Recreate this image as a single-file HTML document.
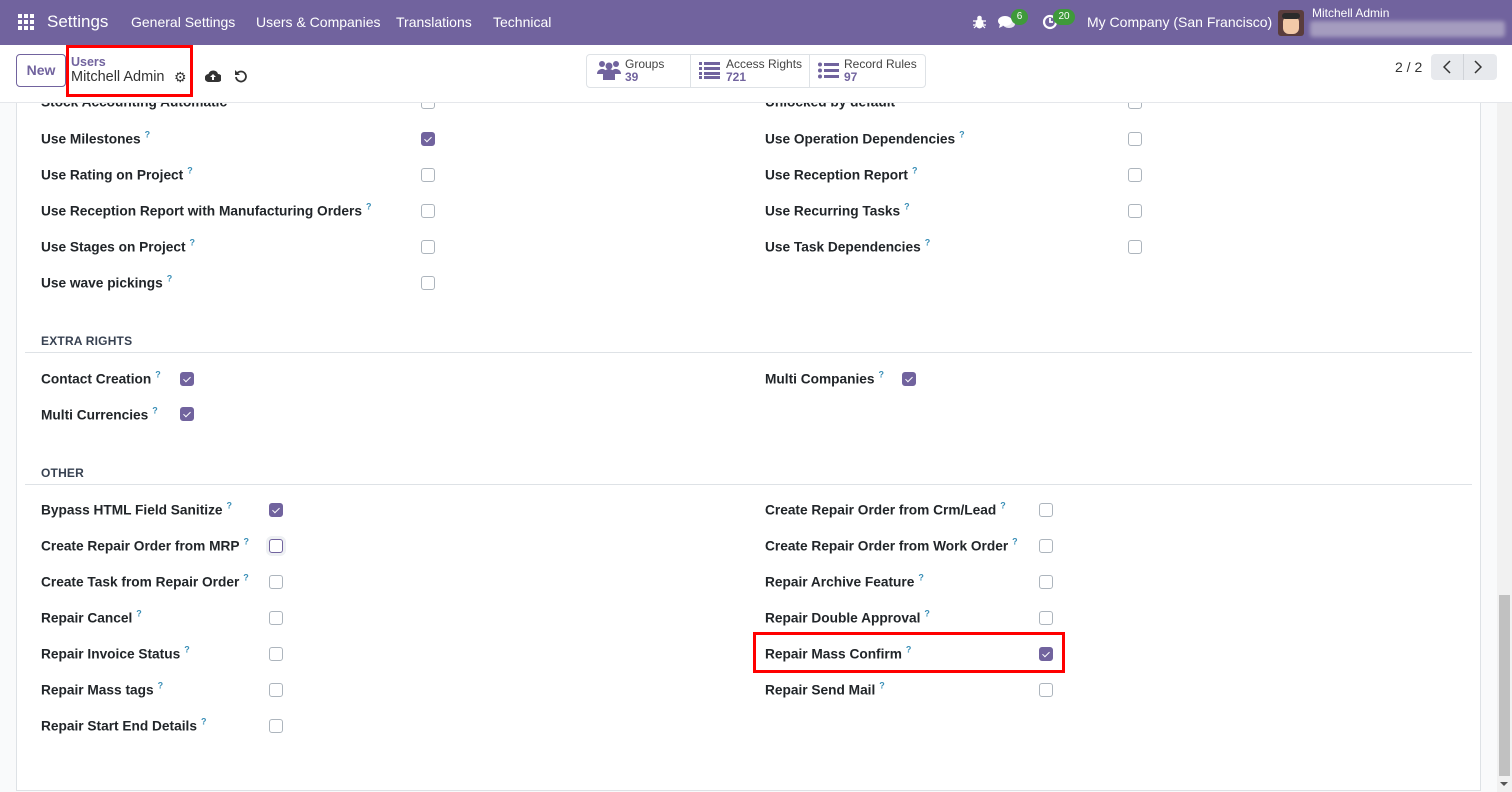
<!DOCTYPE html>
<html><head><meta charset="utf-8"><style>
*{box-sizing:border-box;margin:0;padding:0}
body{width:1512px;height:792px;overflow:hidden;font-family:"Liberation Sans",sans-serif;background:#f9fafb;position:relative;color:#222}
.a{position:absolute;white-space:nowrap}
.nav{position:absolute;left:0;top:0;width:1512px;height:45px;background:#71639e;color:#fff;z-index:6}
.nav .a{font-size:14px;top:14px}
.cp{position:absolute;left:0;top:45px;width:1512px;height:58px;background:#fff;border-bottom:1px solid #e5e7eb;z-index:5}
.sheet{position:absolute;left:16px;top:102px;width:1465px;height:689px;background:#fff;border:1px solid #dee2e6;border-top:none}
.lb{position:absolute;font-size:13.7px;font-weight:bold;color:#212529;white-space:nowrap;transform:translateY(-50%)}
.lb sup{color:#3a8fb7;font-size:9px;margin-left:4px;vertical-align:6px}
.cb{position:absolute;width:14px;height:14px;border:1px solid #adb5bd;border-radius:3px;background:#fff;transform:translateY(-50%)}
.cb.on{background:#71639e;border-color:#71639e}
.cb.on::after{content:"";position:absolute;left:4px;top:1.5px;width:3px;height:6px;border:solid #fff;border-width:0 1.6px 1.6px 0;transform:rotate(45deg)}
.hd{position:absolute;font-size:12px;font-weight:bold;color:#374151;letter-spacing:.2px}
.hr{position:absolute;left:25px;width:1447px;height:1px;background:#dee2e6}
.badge{position:absolute;background:#3f9a3a;color:#fff;font-size:10px;border-radius:9px;height:16px;line-height:16px;text-align:center;top:9px}
.btn{position:absolute;border:1px solid #dee2e6;background:#fff}
</style></head><body>
<div class="nav">
 <svg class="a" style="left:18px;top:14px" width="16" height="16" viewBox="0 0 16 16" fill="#fff"><rect x="0" y="0" width="4" height="4"/><rect x="6" y="0" width="4" height="4"/><rect x="12" y="0" width="4" height="4"/><rect x="0" y="6" width="4" height="4"/><rect x="6" y="6" width="4" height="4"/><rect x="12" y="6" width="4" height="4"/><rect x="0" y="12" width="4" height="4"/><rect x="6" y="12" width="4" height="4"/><rect x="12" y="12" width="4" height="4"/></svg>
 <div class="a" style="left:47px;top:12px;font-size:17px">Settings</div>
 <div class="a" style="left:131px">General Settings</div>
 <div class="a" style="left:256px">Users &amp; Companies</div>
 <div class="a" style="left:396px">Translations</div>
 <div class="a" style="left:493px">Technical</div>
 <svg class="a" style="left:973px;top:15px" width="13" height="14" viewBox="0 0 13 14" fill="#fff"><ellipse cx="6.5" cy="8.5" rx="4" ry="5"/><circle cx="6.5" cy="3" r="2.3"/><path d="M0 6h13M0 10h13M1 13l2-2M12 13l-2-2" stroke="#fff" stroke-width="1.2"/></svg>
 <svg class="a" style="left:998px;top:15px" width="18" height="15" viewBox="0 0 18 15" fill="#fff"><ellipse cx="7" cy="6" rx="7" ry="5"/><path d="M2 9l-1 4 4-2z"/><ellipse cx="11" cy="9" rx="6" ry="4" opacity=".85"/></svg>
 <div class="badge" style="left:1011px;width:17px">6</div>
 <svg class="a" style="left:1042px;top:14px" width="16" height="16" viewBox="0 0 16 16"><circle cx="8" cy="8" r="6" fill="none" stroke="#fff" stroke-width="2.2"/><path d="M8 4v4h3" stroke="#fff" stroke-width="1.8" fill="none"/></svg>
 <div class="badge" style="left:1053px;width:22px">20</div>
 <div class="a" style="left:1087px">My Company (San Francisco)</div>
 <div class="a" style="left:1278px;top:10px;width:26px;height:26px;background:#5a3d3d;border-radius:3px"><div style="position:absolute;left:5px;top:6px;width:16px;height:18px;background:#f2c9a8;border-radius:6px"></div><div style="position:absolute;left:4px;top:3px;width:18px;height:6px;background:#2b2b2b;border-radius:4px"></div></div>
 <div class="a" style="left:1312px;top:6px;font-size:12px">Mitchell Admin</div>
 <div class="a" style="left:1310px;top:21px;width:195px;height:16px;background:#a59cbf;border-radius:3px;filter:blur(2px)"></div>
</div>
<div class="cp">
 <div class="btn" style="left:16px;top:9px;width:50px;height:33px;border-color:#71639e;border-radius:4px;color:#71639e;font-weight:bold;font-size:14px;text-align:center;line-height:31px">New</div>
 <div class="a" style="left:71px;top:10px;font-size:12.5px;color:#71639e;font-weight:bold">Users</div>
 <div class="a" style="left:71px;top:24px;font-size:14.5px;color:#333">Mitchell Admin</div>
 <div class="a" style="left:174px;top:24px;font-size:14px;color:#333">⚙</div>
 <svg class="a" style="left:205px;top:25px" width="16" height="12" viewBox="0 0 16 12"><path d="M4 12a4 4 0 0 1-.5-8A5 5 0 0 1 13 4a3.5 3.5 0 0 1 0 8z" fill="#333"/><path d="M8 4l-3 3h2v3h2V7h2z" fill="#fff"/></svg>
 <svg class="a" style="left:234px;top:24px" width="14" height="14" viewBox="0 0 14 14"><path d="M3 4.5A5 5 0 1 1 2 8" fill="none" stroke="#333" stroke-width="1.8"/><path d="M1 1v5h5z" fill="#333"/></svg>
 <div class="a" style="left:66px;top:0;width:127px;height:52px;border:3px solid #f00"></div>
 <div class="btn" style="left:586px;top:9px;width:340px;height:34px;border-radius:4px"></div>
 <div class="a" style="left:690px;top:9px;width:1px;height:34px;background:#dee2e6"></div>
 <div class="a" style="left:809px;top:9px;width:1px;height:34px;background:#dee2e6"></div>
 <svg class="a" style="left:597px;top:15px" width="24" height="20" viewBox="0 0 24 20" fill="#71639e"><circle cx="5" cy="4" r="3"/><circle cx="19" cy="4" r="3"/><circle cx="12" cy="6" r="3.5"/><path d="M0 14a5 5 0 0 1 9-3v3zM24 14a5 5 0 0 0-9-3v3z"/><path d="M6 20v-5a6 6 0 0 1 12 0v5z"/></svg>
 <div class="a" style="left:625px;top:12px;font-size:12px;color:#444">Groups</div>
 <div class="a" style="left:625px;top:25px;font-size:12px;color:#71639e;font-weight:bold">39</div>
 <svg class="a" style="left:699px;top:17px" width="21" height="17" viewBox="0 0 21 17" fill="#71639e"><rect x="0" y="0" width="3" height="3"/><rect x="5" y="0" width="16" height="3"/><rect x="0" y="5" width="3" height="3"/><rect x="5" y="5" width="16" height="3"/><rect x="0" y="10" width="3" height="3"/><rect x="5" y="10" width="16" height="3"/><rect x="0" y="14" width="3" height="3"/><rect x="5" y="14" width="16" height="3"/></svg>
 <div class="a" style="left:726px;top:12px;font-size:12px;color:#444">Access Rights</div>
 <div class="a" style="left:726px;top:25px;font-size:12px;color:#71639e;font-weight:bold">721</div>
 <svg class="a" style="left:818px;top:17px" width="21" height="17" viewBox="0 0 21 17" fill="#71639e"><circle cx="2" cy="2.5" r="2"/><rect x="6" y="1" width="15" height="3"/><circle cx="2" cy="8.5" r="2"/><rect x="6" y="7" width="15" height="3"/><circle cx="2" cy="14.5" r="2"/><rect x="6" y="13" width="15" height="3"/></svg>
 <div class="a" style="left:844px;top:12px;font-size:12px;color:#444">Record Rules</div>
 <div class="a" style="left:844px;top:25px;font-size:12px;color:#71639e;font-weight:bold">97</div>
 <div class="a" style="left:1395px;top:14px;font-size:14px;color:#333">2 / 2</div>
 <div class="a" style="left:1431px;top:9px;width:66px;height:26px;background:#e7e9ed;border-radius:4px"></div>
 <div class="a" style="left:1463px;top:9px;width:1px;height:26px;background:#d0d3d8"></div>
 <svg class="a" style="left:1443px;top:15px" width="8" height="14" viewBox="0 0 8 14"><path d="M7 1L1 7l6 6" fill="none" stroke="#333" stroke-width="1.5"/></svg>
 <svg class="a" style="left:1474px;top:15px" width="8" height="14" viewBox="0 0 8 14"><path d="M1 1l6 6-6 6" fill="none" stroke="#333" stroke-width="1.5"/></svg>
</div>
<div class="sheet"></div>
<div style="position:absolute;left:0;top:102px;width:1512px;height:690px">
 <div class="lb" style="left:41px;top:0px">Stock Accounting Automatic</div><div class="cb" style="left:421px;top:0px"></div>
 <div class="lb" style="left:765px;top:0px">Unlocked by default</div><div class="cb" style="left:1128px;top:0px"></div>
 <div class="lb" style="left:41px;top:36px">Use Milestones<sup>?</sup></div><div class="cb on" style="left:421px;top:37px"></div>
 <div class="lb" style="left:765px;top:36px">Use Operation Dependencies<sup>?</sup></div><div class="cb" style="left:1128px;top:37px"></div>
 <div class="lb" style="left:41px;top:72px">Use Rating on Project<sup>?</sup></div><div class="cb" style="left:421px;top:73px"></div>
 <div class="lb" style="left:765px;top:72px">Use Reception Report<sup>?</sup></div><div class="cb" style="left:1128px;top:73px"></div>
 <div class="lb" style="left:41px;top:108px">Use Reception Report with Manufacturing Orders<sup>?</sup></div><div class="cb" style="left:421px;top:109px"></div>
 <div class="lb" style="left:765px;top:108px">Use Recurring Tasks<sup>?</sup></div><div class="cb" style="left:1128px;top:109px"></div>
 <div class="lb" style="left:41px;top:144px">Use Stages on Project<sup>?</sup></div><div class="cb" style="left:421px;top:145px"></div>
 <div class="lb" style="left:765px;top:144px">Use Task Dependencies<sup>?</sup></div><div class="cb" style="left:1128px;top:145px"></div>
 <div class="lb" style="left:41px;top:180px">Use wave pickings<sup>?</sup></div><div class="cb" style="left:421px;top:181px"></div>
 <div class="hd" style="left:41px;top:232px">EXTRA RIGHTS</div>
 <div class="hr" style="top:250px"></div>
 <div class="lb" style="left:41px;top:276px">Contact Creation<sup>?</sup></div><div class="cb on" style="left:180px;top:277px"></div>
 <div class="lb" style="left:765px;top:276px">Multi Companies<sup>?</sup></div><div class="cb on" style="left:902px;top:277px"></div>
 <div class="lb" style="left:41px;top:312px">Multi Currencies<sup>?</sup></div><div class="cb on" style="left:180px;top:312px"></div>
 <div class="hd" style="left:41px;top:364px">OTHER</div>
 <div class="hr" style="top:382px"></div>
 <div class="lb" style="left:41px;top:407px">Bypass HTML Field Sanitize<sup>?</sup></div><div class="cb on" style="left:269px;top:408px"></div>
 <div class="lb" style="left:765px;top:407px">Create Repair Order from Crm/Lead<sup>?</sup></div><div class="cb" style="left:1039px;top:408px"></div>
 <div class="lb" style="left:41px;top:443px">Create Repair Order from MRP<sup>?</sup></div><div class="cb" style="left:269px;top:444px;border-color:#71639e;box-shadow:0 0 0 3px #eef0f3"></div>
 <div class="lb" style="left:765px;top:443px">Create Repair Order from Work Order<sup>?</sup></div><div class="cb" style="left:1039px;top:444px"></div>
 <div class="lb" style="left:41px;top:479px">Create Task from Repair Order<sup>?</sup></div><div class="cb" style="left:269px;top:480px"></div>
 <div class="lb" style="left:765px;top:479px">Repair Archive Feature<sup>?</sup></div><div class="cb" style="left:1039px;top:480px"></div>
 <div class="lb" style="left:41px;top:515px">Repair Cancel<sup>?</sup></div><div class="cb" style="left:269px;top:516px"></div>
 <div class="lb" style="left:765px;top:515px">Repair Double Approval<sup>?</sup></div><div class="cb" style="left:1039px;top:516px"></div>
 <div class="lb" style="left:41px;top:551px">Repair Invoice Status<sup>?</sup></div><div class="cb" style="left:269px;top:552px"></div>
 <div class="lb" style="left:765px;top:551px">Repair Mass Confirm<sup>?</sup></div><div class="cb on" style="left:1039px;top:552px"></div>
 <div class="lb" style="left:41px;top:587px">Repair Mass tags<sup>?</sup></div><div class="cb" style="left:269px;top:588px"></div>
 <div class="lb" style="left:765px;top:587px">Repair Send Mail<sup>?</sup></div><div class="cb" style="left:1039px;top:588px"></div>
 <div class="lb" style="left:41px;top:623px">Repair Start End Details<sup>?</sup></div><div class="cb" style="left:269px;top:624px"></div>
 <div class="a" style="left:753px;top:530px;width:312px;height:41px;border:3px solid #f00"></div>
</div>
<div style="position:absolute;left:1497px;top:103px;width:15px;height:689px;background:#f1f1f1;z-index:4"></div>
<div style="position:absolute;left:1499px;top:595px;width:11px;height:181px;background:#c1c1c1;z-index:4"></div>
<div style="position:absolute;left:1500px;top:782px;width:0;height:0;border:4px solid transparent;border-top:4px solid #555;z-index:4"></div>
</body></html>
